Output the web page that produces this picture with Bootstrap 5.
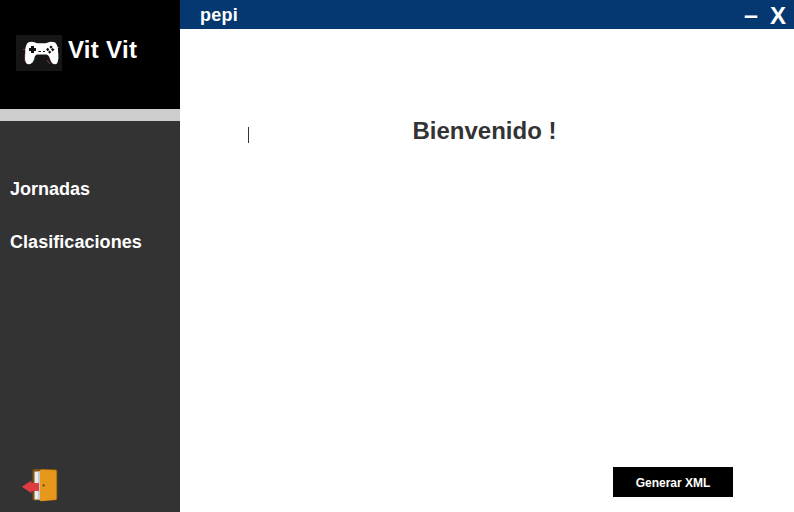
<!DOCTYPE html>
<html lang="es">
<head>
<meta charset="utf-8">
<meta name="viewport" content="width=device-width, initial-scale=1">
<title>Vit Vit</title>
<link rel="stylesheet" href="https://cdn.jsdelivr.net/npm/bootstrap@5.3.0/dist/css/bootstrap.min.css">
<style>
body { font-family: "Liberation Sans", Arial, sans-serif; font-weight: 700; line-height: 1; }
.side { width: 180px; background: #333; }
.brand { height: 109px; padding: 35px 16px 0; background: #000; }
.brand-name { font-size: 24px; padding-top: 3px; margin-left: 6px; letter-spacing: .3px; }
.divider { height: 12px; background: #cdcdcd; }
.menu { gap: 35px; padding: 59px 10px 0; font-size: 18px; }
.menu a { line-height: 18px; }
.menu a:last-child { letter-spacing: .05px; }
.exit { margin: 0 0 9px 21px; width: 37px; height: 35px; }
.titlebar { height: 29px; background: #053871; padding: 0 8px 0 20px; }
.user { font-size: 18px; padding-top: 6px; letter-spacing: .25px; }
.win { font-size: 24px; padding-top: 4px; gap: 12px; }
.win button { line-height: 24px; font-weight: 700; }
.win button:first-child { line-height: 22px; height: 22px; font-size: 25px; }
.caret { width: 1px; height: 16px; background: #333; margin: 8px 0 0 68px; }
.welcome { font-size: 24px; font-weight: 700; line-height: 24px; color: #333; margin-left: 163.5px; }
.greeting { padding-top: 90px; }
.generate { width: 120px; height: 30px; font-size: 12px; font-weight: 700; line-height: 12px; background: #000; margin: 0 61px 15px 0; padding: 2px 0 0; }
</style>
</head>
<body>
<div class="d-flex vh-100 overflow-hidden">
  <aside class="side d-flex flex-column flex-shrink-0 text-white">
    <div class="brand d-flex align-items-start">
      <svg width="46" height="36" viewBox="0 0 46 36" aria-hidden="true">
        <path fill="#161616" d="M0 0h46v36H0z"/>
        <path fill="none" stroke="#a34592" stroke-width="1" opacity=".7" d="M7 14.500h3M9 19v7q1 2 3 2M31 25l3 4"/>
        <path fill="none" stroke="#5fb5aa" stroke-width="1" opacity=".6" d="M38 12.500h5M42.300 18v6M19 23l-3 5"/>
        <path fill="#fff" d="M12.500 7.300Q16 6 18.500 7.300Q20 8.300 22 8.300H29Q31 8.300 32.500 7.300Q35 6 38.500 7.300Q41.500 9 42 14.500L42.200 24Q42 29.300 39 29.300Q35.500 29.300 34 24Q32.800 19.500 30 19.500H21.500Q19 19.500 18 24Q16.500 29.300 12.500 29.300Q9.500 29.300 9 24L9.300 14.500Q10 8.800 12.500 7.300Z"/>
        <path fill="#111" d="M15 11h3v2h2v3h-2v2h-3v-2h-2v-3h2zM22.500 16h2.500v1h-2.500zM27 16h2v1h-2z"/>
        <path fill="#111" d="m35 10.500 1.700 1.500-1.700 1.800-1.600-1.800zM31.700 12.700l1.700 1.700-1.700 1.800-1.700-1.800zM36.700 13l1.700 1.600-1.700 1.800-1.700-1.800zM33.700 15.400l1.600 1.700-1.600 1.700-1.700-1.700z"/>
      </svg>
      <div class="brand-name text-nowrap">Vit Vit</div>
    </div>
    <div class="divider"></div>
    <nav class="menu d-flex flex-column">
      <a class="text-white text-decoration-none" href="#">Jornadas</a>
      <a class="text-white text-decoration-none" href="#">Clasificaciones</a>
    </nav>
    <a class="exit mt-auto d-block" href="#" aria-label="Salir">
      <svg class="d-block" width="37" height="35" viewBox="0 0 37 35">
        <rect x="11.400" y="1" width="25" height="31.500" rx="2" fill="#7d5110"/>
        <path fill="#ececee" d="M13.500 3.500H20v28h-6.500z"/>
        <path fill="#c8c9cb" d="M17 3.500H20v28h-3z"/>
        <path fill="#e5981c" d="M19 3Q19 1.700 20.500 1.600L34.500 2.200q1 .1 1 1.300v27q0 1.200-1 1.300L20.500 33.200Q19 33.200 19 32z"/>
        <circle cx="22.700" cy="17.400" r="1.100" fill="#6c430b"/>
        <path fill="#df3c42" d="M.8 18.800 10.500 12.500V15H18v8h-7.500v2.300z"/>
      </svg>
    </a>
  </aside>
  <main class="flex-grow-1 d-flex flex-column bg-white">
    <header class="titlebar d-flex justify-content-between align-items-start text-white">
      <div class="user">pepi</div>
      <div class="win d-flex">
        <button class="border-0 bg-transparent text-white p-0" type="button" aria-label="Minimizar">–</button>
        <button class="border-0 bg-transparent text-white p-0" type="button" aria-label="Cerrar">X</button>
      </div>
    </header>
    <section class="greeting d-flex align-items-start">
      <div class="caret"></div>
      <h1 class="welcome mb-0">Bienvenido !</h1>
    </section>
    <button class="generate border-0 text-white mt-auto align-self-end" type="button">Generar XML</button>
  </main>
</div>
<script src="https://cdn.jsdelivr.net/npm/bootstrap@5.3.0/dist/js/bootstrap.bundle.min.js"></script>
</body>
</html>
